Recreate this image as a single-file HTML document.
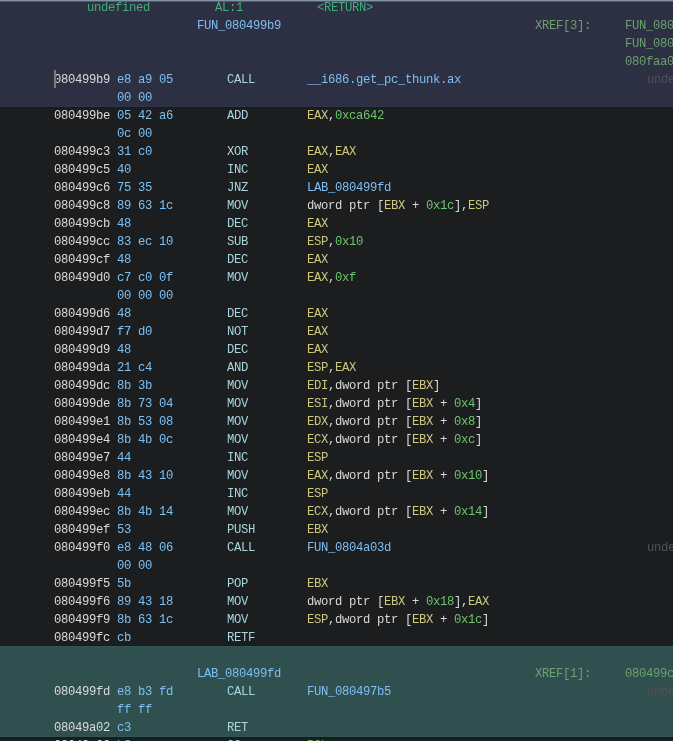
<!DOCTYPE html>
<html><head><meta charset="utf-8"><title>Listing</title>
<style>
html,body{margin:0;padding:0;background:#1b1d1f;}
#v{position:relative;width:673px;height:741px;overflow:hidden;background:#1b1d1f;
font-family:"Liberation Mono",monospace;font-size:13.6px;line-height:18px;white-space:pre;}
#top{position:absolute;left:0;top:0;width:673px;height:107px;background:#2d2f43;box-shadow:inset 0 -1px 0 #30334a, 0 1px 0 #191a1b;}
#topline{position:absolute;left:0;top:0;width:673px;height:1px;background:#8494a6;border-bottom:1px solid #525a6c;}
#teal{position:absolute;left:0;top:646px;width:673px;height:91px;background:#2f504f;box-shadow:inset 0 1px 0 #315554, inset 0 -1px 0 #315554, 0 1px 0 #191a1b, 0 -1px 0 #191a1b;}
#cur{position:absolute;left:54px;top:70px;width:2px;height:18px;background:#7b7b7b;}
#t{position:absolute;left:0;top:1px;width:673px;height:741px;will-change:transform;}
span{position:absolute;height:18px;transform:scaleX(0.9);transform-origin:0 0;letter-spacing:-0.382px;}
i{font-style:normal}
.a{color:#dadada}
.b{color:#7cc0f2}
.m{color:#a8d4de}
.o{color:#d8d8d8}
.r{color:#cdc781}
.c{color:#6cc66e}
.l{color:#80bef1}
.g{color:#3fae7a}
.x{color:#6c9f72}
.u{color:#50515a}
.u2{color:#564f54}
</style></head><body>
<div id="v">
<div id="top"></div><div id="topline"></div><div id="teal"></div>
<div id="t">
<span class="g" style="left:87px;top:-2px">undefined</span>
<span class="g" style="left:215px;top:-2px">AL:1</span>
<span class="g" style="left:317.4px;top:-2px">&lt;RETURN&gt;</span>
<span class="l" style="left:197px;top:16px">FUN_080499b9</span>
<span class="x" style="left:535px;top:16px">XREF[3]:</span>
<span class="x" style="left:625px;top:16px">FUN_0804a03d</span>
<span class="x" style="left:625px;top:34px">FUN_0804a0c1</span>
<span class="x" style="left:625px;top:52px">080faa0c</span>
<span class="a" style="left:54px;top:70px">080499b9</span>
<span class="b" style="left:116.5px;top:70px">e8 a9 05</span>
<span class="m" style="left:227px;top:70px">CALL</span>
<span class="o" style="left:307px;top:70px"><i class="l">__i686.get_pc_thunk.ax</i></span>
<span class="u" style="left:647px;top:70px">undefined</span>
<span class="b" style="left:116.5px;top:88px">00 00</span>
<span class="a" style="left:54px;top:106px">080499be</span>
<span class="b" style="left:116.5px;top:106px">05 42 a6</span>
<span class="m" style="left:227px;top:106px">ADD</span>
<span class="o" style="left:307px;top:106px"><i class="r">EAX</i>,<i class="c">0xca642</i></span>
<span class="b" style="left:116.5px;top:124px">0c 00</span>
<span class="a" style="left:54px;top:142px">080499c3</span>
<span class="b" style="left:116.5px;top:142px">31 c0</span>
<span class="m" style="left:227px;top:142px">XOR</span>
<span class="o" style="left:307px;top:142px"><i class="r">EAX</i>,<i class="r">EAX</i></span>
<span class="a" style="left:54px;top:160px">080499c5</span>
<span class="b" style="left:116.5px;top:160px">40</span>
<span class="m" style="left:227px;top:160px">INC</span>
<span class="o" style="left:307px;top:160px"><i class="r">EAX</i></span>
<span class="a" style="left:54px;top:178px">080499c6</span>
<span class="b" style="left:116.5px;top:178px">75 35</span>
<span class="m" style="left:227px;top:178px">JNZ</span>
<span class="o" style="left:307px;top:178px"><i class="l">LAB_080499fd</i></span>
<span class="a" style="left:54px;top:196px">080499c8</span>
<span class="b" style="left:116.5px;top:196px">89 63 1c</span>
<span class="m" style="left:227px;top:196px">MOV</span>
<span class="o" style="left:307px;top:196px">dword ptr [<i class="r">EBX</i> + <i class="c">0x1c</i>],<i class="r">ESP</i></span>
<span class="a" style="left:54px;top:214px">080499cb</span>
<span class="b" style="left:116.5px;top:214px">48</span>
<span class="m" style="left:227px;top:214px">DEC</span>
<span class="o" style="left:307px;top:214px"><i class="r">EAX</i></span>
<span class="a" style="left:54px;top:232px">080499cc</span>
<span class="b" style="left:116.5px;top:232px">83 ec 10</span>
<span class="m" style="left:227px;top:232px">SUB</span>
<span class="o" style="left:307px;top:232px"><i class="r">ESP</i>,<i class="c">0x10</i></span>
<span class="a" style="left:54px;top:250px">080499cf</span>
<span class="b" style="left:116.5px;top:250px">48</span>
<span class="m" style="left:227px;top:250px">DEC</span>
<span class="o" style="left:307px;top:250px"><i class="r">EAX</i></span>
<span class="a" style="left:54px;top:268px">080499d0</span>
<span class="b" style="left:116.5px;top:268px">c7 c0 0f</span>
<span class="m" style="left:227px;top:268px">MOV</span>
<span class="o" style="left:307px;top:268px"><i class="r">EAX</i>,<i class="c">0xf</i></span>
<span class="b" style="left:116.5px;top:286px">00 00 00</span>
<span class="a" style="left:54px;top:304px">080499d6</span>
<span class="b" style="left:116.5px;top:304px">48</span>
<span class="m" style="left:227px;top:304px">DEC</span>
<span class="o" style="left:307px;top:304px"><i class="r">EAX</i></span>
<span class="a" style="left:54px;top:322px">080499d7</span>
<span class="b" style="left:116.5px;top:322px">f7 d0</span>
<span class="m" style="left:227px;top:322px">NOT</span>
<span class="o" style="left:307px;top:322px"><i class="r">EAX</i></span>
<span class="a" style="left:54px;top:340px">080499d9</span>
<span class="b" style="left:116.5px;top:340px">48</span>
<span class="m" style="left:227px;top:340px">DEC</span>
<span class="o" style="left:307px;top:340px"><i class="r">EAX</i></span>
<span class="a" style="left:54px;top:358px">080499da</span>
<span class="b" style="left:116.5px;top:358px">21 c4</span>
<span class="m" style="left:227px;top:358px">AND</span>
<span class="o" style="left:307px;top:358px"><i class="r">ESP</i>,<i class="r">EAX</i></span>
<span class="a" style="left:54px;top:376px">080499dc</span>
<span class="b" style="left:116.5px;top:376px">8b 3b</span>
<span class="m" style="left:227px;top:376px">MOV</span>
<span class="o" style="left:307px;top:376px"><i class="r">EDI</i>,dword ptr [<i class="r">EBX</i>]</span>
<span class="a" style="left:54px;top:394px">080499de</span>
<span class="b" style="left:116.5px;top:394px">8b 73 04</span>
<span class="m" style="left:227px;top:394px">MOV</span>
<span class="o" style="left:307px;top:394px"><i class="r">ESI</i>,dword ptr [<i class="r">EBX</i> + <i class="c">0x4</i>]</span>
<span class="a" style="left:54px;top:412px">080499e1</span>
<span class="b" style="left:116.5px;top:412px">8b 53 08</span>
<span class="m" style="left:227px;top:412px">MOV</span>
<span class="o" style="left:307px;top:412px"><i class="r">EDX</i>,dword ptr [<i class="r">EBX</i> + <i class="c">0x8</i>]</span>
<span class="a" style="left:54px;top:430px">080499e4</span>
<span class="b" style="left:116.5px;top:430px">8b 4b 0c</span>
<span class="m" style="left:227px;top:430px">MOV</span>
<span class="o" style="left:307px;top:430px"><i class="r">ECX</i>,dword ptr [<i class="r">EBX</i> + <i class="c">0xc</i>]</span>
<span class="a" style="left:54px;top:448px">080499e7</span>
<span class="b" style="left:116.5px;top:448px">44</span>
<span class="m" style="left:227px;top:448px">INC</span>
<span class="o" style="left:307px;top:448px"><i class="r">ESP</i></span>
<span class="a" style="left:54px;top:466px">080499e8</span>
<span class="b" style="left:116.5px;top:466px">8b 43 10</span>
<span class="m" style="left:227px;top:466px">MOV</span>
<span class="o" style="left:307px;top:466px"><i class="r">EAX</i>,dword ptr [<i class="r">EBX</i> + <i class="c">0x10</i>]</span>
<span class="a" style="left:54px;top:484px">080499eb</span>
<span class="b" style="left:116.5px;top:484px">44</span>
<span class="m" style="left:227px;top:484px">INC</span>
<span class="o" style="left:307px;top:484px"><i class="r">ESP</i></span>
<span class="a" style="left:54px;top:502px">080499ec</span>
<span class="b" style="left:116.5px;top:502px">8b 4b 14</span>
<span class="m" style="left:227px;top:502px">MOV</span>
<span class="o" style="left:307px;top:502px"><i class="r">ECX</i>,dword ptr [<i class="r">EBX</i> + <i class="c">0x14</i>]</span>
<span class="a" style="left:54px;top:520px">080499ef</span>
<span class="b" style="left:116.5px;top:520px">53</span>
<span class="m" style="left:227px;top:520px">PUSH</span>
<span class="o" style="left:307px;top:520px"><i class="r">EBX</i></span>
<span class="a" style="left:54px;top:538px">080499f0</span>
<span class="b" style="left:116.5px;top:538px">e8 48 06</span>
<span class="m" style="left:227px;top:538px">CALL</span>
<span class="o" style="left:307px;top:538px"><i class="l">FUN_0804a03d</i></span>
<span class="u" style="left:647px;top:538px">undefined</span>
<span class="b" style="left:116.5px;top:556px">00 00</span>
<span class="a" style="left:54px;top:574px">080499f5</span>
<span class="b" style="left:116.5px;top:574px">5b</span>
<span class="m" style="left:227px;top:574px">POP</span>
<span class="o" style="left:307px;top:574px"><i class="r">EBX</i></span>
<span class="a" style="left:54px;top:592px">080499f6</span>
<span class="b" style="left:116.5px;top:592px">89 43 18</span>
<span class="m" style="left:227px;top:592px">MOV</span>
<span class="o" style="left:307px;top:592px">dword ptr [<i class="r">EBX</i> + <i class="c">0x18</i>],<i class="r">EAX</i></span>
<span class="a" style="left:54px;top:610px">080499f9</span>
<span class="b" style="left:116.5px;top:610px">8b 63 1c</span>
<span class="m" style="left:227px;top:610px">MOV</span>
<span class="o" style="left:307px;top:610px"><i class="r">ESP</i>,dword ptr [<i class="r">EBX</i> + <i class="c">0x1c</i>]</span>
<span class="a" style="left:54px;top:628px">080499fc</span>
<span class="b" style="left:116.5px;top:628px">cb</span>
<span class="m" style="left:227px;top:628px">RETF</span>
<span class="l" style="left:197px;top:664px">LAB_080499fd</span>
<span class="x" style="left:535px;top:664px">XREF[1]:</span>
<span class="x" style="left:625px;top:664px">080499c6(j)</span>
<span class="a" style="left:54px;top:682px">080499fd</span>
<span class="b" style="left:116.5px;top:682px">e8 b3 fd</span>
<span class="m" style="left:227px;top:682px">CALL</span>
<span class="o" style="left:307px;top:682px"><i class="l">FUN_080497b5</i></span>
<span class="u2" style="left:647px;top:682px">undefined</span>
<span class="b" style="left:116.5px;top:700px">ff ff</span>
<span class="a" style="left:54px;top:718px">08049a02</span>
<span class="b" style="left:116.5px;top:718px">c3</span>
<span class="m" style="left:227px;top:718px">RET</span>
<span class="a" style="left:54px;top:736px">08049a03</span>
<span class="b" style="left:116.5px;top:736px">b8</span>
<span class="m" style="left:227px;top:736px">??</span>
<span class="o" style="left:307px;top:736px"><i class="c">B8h</i></span>
</div>
<div id="cur"></div>
</div>
</body></html>
